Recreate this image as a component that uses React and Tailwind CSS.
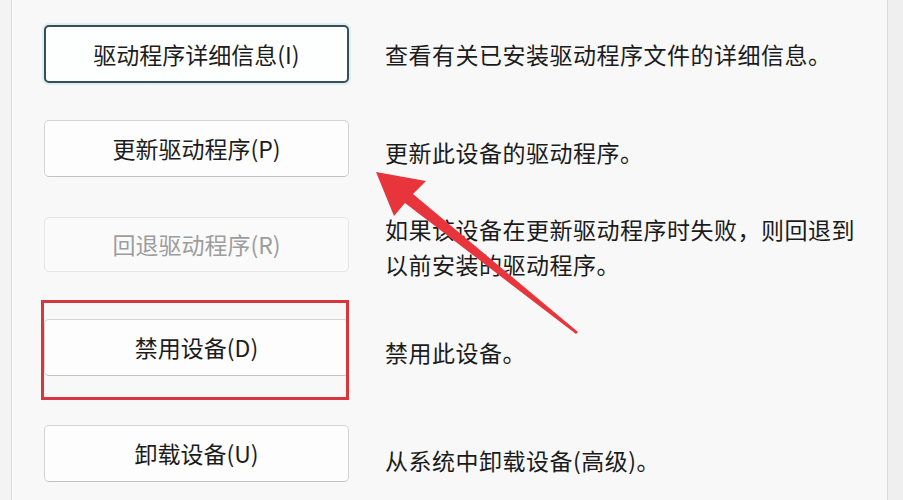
import React from 'react';

const rows = [
  { label: '驱动程序详细信息(I)', desc: ['查看有关已安装驱动程序文件的详细信息。'], focused: true, mt: 'mt-[25px]', h: 'h-[58px]', pt: 'pt-0' },
  { label: '更新驱动程序(P)', desc: ['更新此设备的驱动程序。'], mt: 'mt-[37px]', h: 'h-[57px]', pt: 'pt-[7px]' },
  { label: '回退驱动程序(R)', desc: ['如果该设备在更新驱动程序时失败，则回退到', '以前安装的驱动程序。'], disabled: true, mt: 'mt-[40px]', h: 'h-[55px]', pt: 'pt-[5px]' },
  { label: '禁用设备(D)', desc: ['禁用此设备。'], mt: 'mt-[47px]', h: 'h-[57px]', pt: 'pt-[9px]' },
  { label: '卸载设备(U)', desc: ['从系统中卸载设备(高级)。'], mt: 'mt-[49px]', h: 'h-[57px]', pt: 'pt-[13px]' },
];

const DriverButton = ({ label, focused, disabled, h }) => {
  let cls = 'border border-[#d4d4d4] border-b-[#c2c2c2] bg-[#fdfdfd] text-[#1c1c1c]';
  if (focused) cls = 'border-2 border-[#3b4c53] bg-[#fdfefe] text-[#1c1c1c] shadow-[0_0_0_2px_#d9f0f5]';
  if (disabled) cls = 'border border-[#e6e6e6] bg-[#fafafa] text-[#9d9d9d]';
  return (
    <button className={`w-[305px] ${h} shrink-0 rounded-[5px] flex items-center justify-center text-[23px] ${cls}`}>
      {label}
    </button>
  );
};

export default function App() {
  return (
    <div
      className="relative w-[903px] h-[500px] overflow-hidden flex bg-[#f8f8f8]"
      style={{ fontFamily: '"Noto Sans CJK SC", "Noto Sans", sans-serif' }}
    >
      {/* left window edge */}
      <div className="w-[12px] shrink-0 bg-[#f3f3f3] border-r border-[#dedede]" />

      <div className="flex-1 flex flex-col pl-[32px]">
        {rows.map((r) => (
          <div key={r.label} className={`flex items-center shrink-0 ${r.mt} ${r.h}`}>
            <DriverButton {...r} />
            <div className={`ml-[36px] text-[23px] leading-[35px] tracking-[0.5px] whitespace-nowrap text-[#1b1b1b] ${r.pt}`}>
              {r.desc.map((line) => (
                <div key={line}>{line}</div>
              ))}
            </div>
          </div>
        ))}
      </div>

      {/* right window edge */}
      <div className="w-[16px] shrink-0 bg-[#efefef] border-l border-[#dcdcdc]" />

      {/* annotation: red box */}
      <div className="absolute left-[41px] top-[300px] w-[308px] h-[100px] border-[3px] border-[#d8363d]" />

      {/* annotation: arrow */}
      <svg className="absolute left-0 top-0 pointer-events-none" width="903" height="500" viewBox="0 0 903 500">
        <polygon
          points="376,172 426,181 413,194 578,332 576,334 405,203 394,216"
          fill="#e8353b"
        />
      </svg>
    </div>
  );
}
